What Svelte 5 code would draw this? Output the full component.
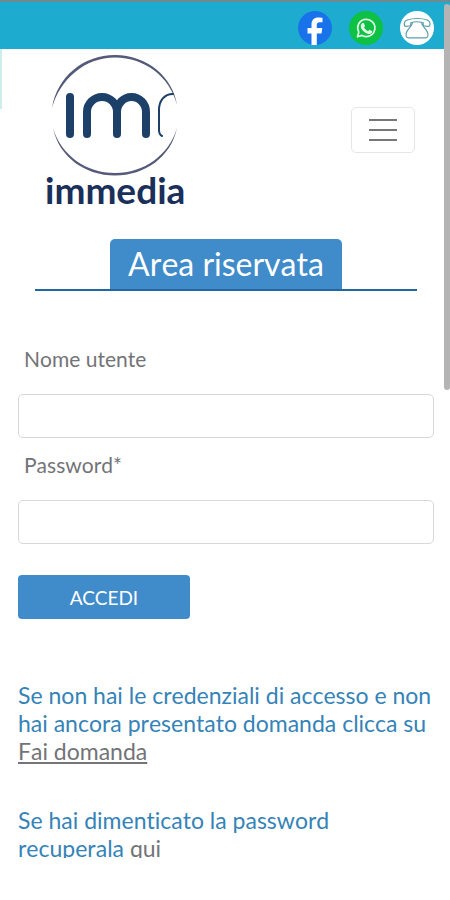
<script>
	let username = $state("");
	let password = $state("");
	let menuOpen = $state(false);
</script>

<div class="screen">
	<div class="topbar">
		<a href="#facebook" aria-label="Facebook">
			<svg viewBox="0 0 34 34">
				<circle cx="17" cy="17" r="17" fill="#1873eb" />
				<path
					fill="#fff"
					d="M13.500 34V22.500H9.500V17h4V13.500c0-4.600 2.700-7 6.700-7 2.400 0 4.300.3 4.300.3v4.400h-2.900c-2.100 0-2.800 1.100-2.800 2.400V17h5.500l-.8 5.500h-4.700V34z"
				/>
			</svg>
		</a>
		<a href="#whatsapp" aria-label="WhatsApp">
			<svg viewBox="0 0 34 34">
				<circle cx="17" cy="17" r="17" fill="#0cc143" />
				<path
					fill="none"
					stroke="#e4f8e6"
					stroke-width="1.700"
					stroke-linejoin="round"
					d="M8.500 25.800l1.300-4.700a8.600 8.600 0 1 1 3.300 3.300z"
				/>
				<path
					fill="#e4f8e6"
					d="M14.200 12c.5 0 .7 0 .9.600l.9 2.100c.1.400-.2.800-1 1.600.9 1.800 2.200 3 4.200 3.900.9-1.100 1.200-1.500 1.600-1.300l2.200 1.100c.4.300.1 1.500-.5 2.100-1.500 1.400-3.600.9-5.800-.2-2.300-1.300-4.200-3.500-4.800-5.500-.4-1.600.3-3.600 1.500-4.300z"
				/>
			</svg>
		</a>
		<a href="#telefono" aria-label="Telefono">
			<svg viewBox="0 0 34 34">
				<circle cx="17" cy="17" r="17" fill="#fff" />
				<g fill="none" stroke="#5d9ea6" stroke-width="1.200" stroke-linejoin="round">
					<path
						d="M4.500 14.500c-.8-2.800.3-4.500 2.800-5.500C13 7 22 7 27.200 9c2.500 1 3.300 2.700 2.500 5.500-.3.800-.9 1-1.700.9l-3.500-.4c-1-.1-1.300-.6-1.300-1.500v-1.700c-3.400-1.100-9.400-1.100-12.400 0v1.700c0 .9-.3 1.400-1.300 1.500l-3.500.4c-.8.1-1.300-.2-1.500-.9z"
					/>
					<path
						d="M12.500 11.300c0 3.200-4 5.500-6 10-1.200 3.200-.2 5.500 2.200 5.500h16.600c2.400 0 3.400-2.300 2.200-5.500-2-4.500-6-6.800-6-10"
					/>
				</g>
			</svg>
		</a>
	</div>

	<header>
		<a class="brand" href="#home">
			<svg viewBox="0 0 128 120" aria-hidden="true">
				<g fill="#555a78">
					<path d="M1 53C6 22 32 0 64 0s58 22 62 50C119 22 94 2.500 64 2.500S9 24 1 53z" />
					<path d="M2 73c8 27 33 45 62 45s54-18 62-45c-6 29-32 47.500-62 47.500S8 102 2 73z" />
				</g>
				<g fill="none" stroke="#1d4068" stroke-width="8" stroke-linecap="round">
					<path d="M19 42v37" />
					<path d="M36 79V57a15 15 0 0 1 30 0v22M66 57a14.500 15 0 0 1 29 0v22" />
				</g>
				<path
					d="M122 39c-9 0-14 7-14 16v20c0 4 1 5 3 6"
					fill="none"
					stroke="#1d4068"
					stroke-width="2"
					stroke-linecap="round"
				/>
			</svg>
			<span>immedia</span>
		</a>
		<button
			class="toggler"
			aria-label="Menu"
			aria-expanded={menuOpen}
			onclick={() => (menuOpen = !menuOpen)}
		>
			<i></i>
			<i></i>
			<i></i>
		</button>
	</header>

	<main>
		<div class="title">
			<h1>Area riservata</h1>
		</div>

		<form onsubmit={(e) => e.preventDefault()}>
			<label for="username">Nome utente</label>
			<input id="username" type="text" bind:value={username} />
			<label for="password">Password*</label>
			<input id="password" type="password" bind:value={password} />
			<button class="submit" type="submit">ACCEDI</button>
		</form>

		<p>
			Se non hai le credenziali di accesso e non hai ancora presentato domanda clicca su
			<a class="underlined" href="#domanda">Fai domanda</a>
		</p>
		<p>Se hai dimenticato la password recuperala <a href="#recupera">qui</a></p>
	</main>

	<div class="edge"></div>
	<div class="scrollbar"></div>
</div>

<style>
	:global(body) {
		margin: 0;
		background: #fff;
	}

	.screen {
		position: relative;
		height: calc(100vh - 42px);
		overflow: hidden;
		font-family: Lato, "Open Sans", sans-serif;
		font-kerning: none;
		font-variant-ligatures: none;
		color: #737477;
		background: #fff;
	}

	.topbar {
		display: flex;
		justify-content: flex-end;
		align-items: center;
		gap: 17px;
		height: 49px;
		padding: 4px 16px 0;
		box-sizing: border-box;
		border-top: 2px solid #6f8a90;
		background: #1eabd0;
	}

	.topbar a,
	.topbar svg {
		display: block;
		width: 34px;
		height: 34px;
	}

	header {
		display: flex;
		justify-content: space-between;
		align-items: center;
		padding: 6px 35px 2px 45px;
	}

	.brand {
		display: flex;
		flex-direction: column;
		align-items: center;
		color: #1a2f5a;
		text-decoration: none;
	}

	.brand svg {
		display: block;
		width: 128px;
		height: 120px;
		overflow: visible;
	}

	.brand span {
		font-size: 37px;
		font-weight: 700;
		line-height: 30px;
	}

	.toggler {
		display: flex;
		flex-direction: column;
		align-items: center;
		justify-content: center;
		gap: 8px;
		width: 64px;
		height: 46px;
		padding: 0;
		border: 1px solid #e6e6e6;
		border-radius: 5px;
		background: #fff;
		cursor: pointer;
	}

	.toggler i {
		width: 28px;
		height: 2px;
		background: #77777b;
	}

	main {
		padding: 32px 16px 0 18px;
	}

	.title {
		display: flex;
		justify-content: center;
		margin: 0 17px;
		border-bottom: 2px solid #2167a3;
	}

	h1 {
		margin: 0;
		padding: 0 18px;
		border-radius: 5px 5px 0 0;
		font-size: 32px;
		font-weight: 400;
		line-height: 50px;
		color: #fff;
		background: #408bca;
	}

	form {
		display: flex;
		flex-direction: column;
		align-items: flex-start;
		margin-top: 49px;
	}

	label {
		padding: 0 6px;
		font-size: 21px;
		line-height: 38px;
	}

	input {
		width: 100%;
		height: 44px;
		margin: 16px 0 8px;
		padding: 0 12px;
		box-sizing: border-box;
		border: 1px solid #d8d8da;
		border-radius: 5px;
		font-family: inherit;
		font-size: 21px;
		color: inherit;
		background: #fff;
	}

	.submit {
		width: 172px;
		height: 44px;
		margin-top: 23px;
		padding: 0;
		border: 0;
		border-radius: 4px;
		font-family: inherit;
		font-size: 19px;
		color: #fff;
		background: #408bca;
		cursor: pointer;
	}

	p {
		margin: 62px 0 0;
		font-size: 23px;
		line-height: 28px;
		color: #3583b7;
	}

	p + p {
		margin-top: 41px;
	}

	p a {
		color: #737477;
		text-decoration: none;
	}

	.underlined {
		text-decoration: underline;
	}

	/* closed side drawer peeking in on the left */
	.edge {
		position: absolute;
		top: 49px;
		left: 0;
		width: 2px;
		height: 60px;
		background: #cdeeea;
	}

	.scrollbar {
		position: absolute;
		top: 4px;
		right: 0;
		width: 6px;
		height: 45%;
		border-radius: 3px;
		background: #b4b4b4;
	}
</style>
